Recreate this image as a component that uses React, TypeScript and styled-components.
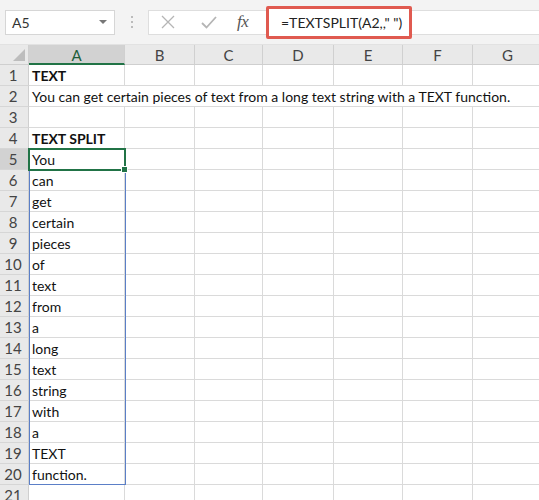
import React from "react";
import styled, { createGlobalStyle } from "styled-components";

const Global = createGlobalStyle`
  html, body { margin: 0; padding: 0; background: #ffffff; overflow: hidden; }
  * { box-sizing: border-box; }
`;

const FONT = `Lato, "Noto Sans", "Liberation Sans", sans-serif`;

const Page = styled.div`
  width: 539px;
  height: 500px;
  overflow: hidden;
  font-family: ${FONT};
  background: #ffffff;
`;

const Toolbar = styled.div`
  height: 45px;
  display: flex;
  align-items: center;
  padding-left: 5px;
  background: #f3f3f3;
  border-bottom: 1px solid #e2e2e2;
`;

const NameBox = styled.div`
  width: 110px;
  height: 25px;
  background: #fff;
  border: 1px solid #d6d6d6;
  display: flex;
  align-items: center;
  justify-content: space-between;
  padding: 0 7px 0 6px;
  font-size: 14px;
  color: #333;
`;

const Caret = styled.span`
  width: 0;
  height: 0;
  border-left: 4px solid transparent;
  border-right: 4px solid transparent;
  border-top: 4px solid #777;
`;

const Grip = styled.div`
  width: 33px;
  display: flex;
  flex-direction: column;
  align-items: center;
  gap: 3px;
  span {
    width: 2px;
    height: 2px;
    background: #a8a8a8;
    border-radius: 1px;
  }
`;

const FormulaBar = styled.div`
  flex: 1;
  height: 25px;
  background: #fff;
  border: 1px solid #dedede;
  border-right: none;
  display: flex;
  align-items: center;
`;

const IconArea = styled.div`
  width: 117px;
  display: flex;
  align-items: center;
  padding-left: 12px;
`;

const IconSlot = styled.div<{ $w: number }>`
  width: ${(p) => p.$w}px;
  display: flex;
  align-items: center;
`;

const Fx = styled.span`
  font-family: "Liberation Serif", "DejaVu Serif", serif;
  font-style: italic;
  font-size: 17px;
  color: #555;
  letter-spacing: -0.5px;
`;

const FormulaBox = styled.div`
  width: 146px;
  height: 33px;
  border: 3px solid #e05a50;
  border-radius: 2px;
  display: flex;
  align-items: center;
  padding-left: 12px;
  font-size: 14px;
  color: #222;
  white-space: nowrap;
  background: #fff;
`;

const Sheet = styled.div`
  position: relative;
  display: grid;
  grid-template-columns: 29px 96px 70px 68px 71px 69px 70px 70px;
  grid-template-rows: 20px repeat(21, 21px);
`;

const Corner = styled.div`
  background: #e9e9e9;
  border-right: 1px solid #d0d0d0;
  border-bottom: 1px solid #cfcfcf;
  position: relative;
  &::after {
    content: "";
    position: absolute;
    right: 3px;
    bottom: 3px;
    width: 0;
    height: 0;
    border-left: 12px solid transparent;
    border-bottom: 12px solid #bdbdbd;
  }
`;

const ColHead = styled.div<{ $active?: boolean }>`
  background: ${(p) => (p.$active ? "#d2d2d2" : "#e9e9e9")};
  border-right: 1px solid #d0d0d0;
  border-bottom: ${(p) => (p.$active ? "2px solid #217346" : "1px solid #cfcfcf")};
  display: flex;
  align-items: center;
  justify-content: center;
  font-size: 15px;
  color: ${(p) => (p.$active ? "#1f5f3a" : "#444")};
  padding-top: 1px;
`;

const RowHead = styled.div<{ $active?: boolean }>`
  background: ${(p) => (p.$active ? "#d2d2d2" : "#e9e9e9")};
  border-right: 1px solid #cfcfcf;
  border-bottom: 1px solid #d6d6d6;
  display: flex;
  align-items: center;
  justify-content: center;
  font-size: 15px;
  color: #444;
  padding-right: 2px;
`;

const Cell = styled.div<{ $bold?: boolean; $span?: number }>`
  grid-column: ${(p) => (p.$span ? `span ${p.$span}` : "auto")};
  border-right: 1px solid #dadada;
  border-bottom: 1px solid #dadada;
  display: flex;
  align-items: center;
  padding-left: 3px;
  font-size: 14px;
  font-weight: ${(p) => (p.$bold ? 700 : 400)};
  color: #111;
  white-space: nowrap;
  overflow: visible;
`;

const SpillRange = styled.div`
  position: absolute;
  left: 29px;
  top: 104px;
  width: 97px;
  height: 336px;
  border: 1px solid #5b7fc7;
  pointer-events: none;
`;

const ActiveCell = styled.div`
  position: absolute;
  left: 28px;
  top: 103px;
  width: 98px;
  height: 23px;
  border: 2px solid #217346;
  pointer-events: none;
  &::after {
    content: "";
    position: absolute;
    right: -4px;
    bottom: -4px;
    width: 5px;
    height: 5px;
    background: #217346;
    border: 1px solid #fff;
  }
`;

const cols = ["A", "B", "C", "D", "E", "F", "G"];
const words = [
  "You", "can", "get", "certain", "pieces", "of", "text", "from", "a",
  "long", "text", "string", "with", "a", "TEXT", "function.",
];

function rowCells(r: number) {
  if (r === 1) return [<Cell key="a" $bold>TEXT</Cell>, ...cols.slice(1).map((c) => <Cell key={c} />)];
  if (r === 2)
    return [
      <Cell key="a" $span={7}>
        You can get certain pieces of text from a long text string with a TEXT function.
      </Cell>,
    ];
  if (r === 4) return [<Cell key="a" $bold>TEXT SPLIT</Cell>, ...cols.slice(1).map((c) => <Cell key={c} />)];
  const w = r >= 5 && r <= 20 ? words[r - 5] : "";
  return [<Cell key="a">{w}</Cell>, ...cols.slice(1).map((c) => <Cell key={c} />)];
}

export default function App() {
  const rows = Array.from({ length: 21 }, (_, i) => i + 1);
  return (
    <Page>
      <Global />
      <Toolbar>
        <NameBox>
          <span>A5</span>
          <Caret />
        </NameBox>
        <Grip>
          <span />
          <span />
          <span />
        </Grip>
        <FormulaBar>
          <IconArea>
            <IconSlot $w={40}>
              <svg width="14" height="14" viewBox="0 0 14 14">
                <path d="M1 1 L13 13 M13 1 L1 13" stroke="#b5b5b5" strokeWidth="1.3" fill="none" />
              </svg>
            </IconSlot>
            <IconSlot $w={36}>
              <svg width="16" height="13" viewBox="0 0 16 13">
                <path d="M1 7 L5.5 11.5 L15 1" stroke="#b5b5b5" strokeWidth="1.8" fill="none" />
              </svg>
            </IconSlot>
            <IconSlot $w={28}>
              <Fx>fx</Fx>
            </IconSlot>
          </IconArea>
          <FormulaBox>=TEXTSPLIT(A2,," ")</FormulaBox>
        </FormulaBar>
      </Toolbar>
      <Sheet>
        <Corner />
        {cols.map((c) => (
          <ColHead key={c} $active={c === "A"}>
            {c}
          </ColHead>
        ))}
        {rows.map((r) => (
          <React.Fragment key={r}>
            <RowHead $active={r === 5}>{r}</RowHead>
            {rowCells(r)}
          </React.Fragment>
        ))}
        <SpillRange />
        <ActiveCell />
      </Sheet>
    </Page>
  );
}
